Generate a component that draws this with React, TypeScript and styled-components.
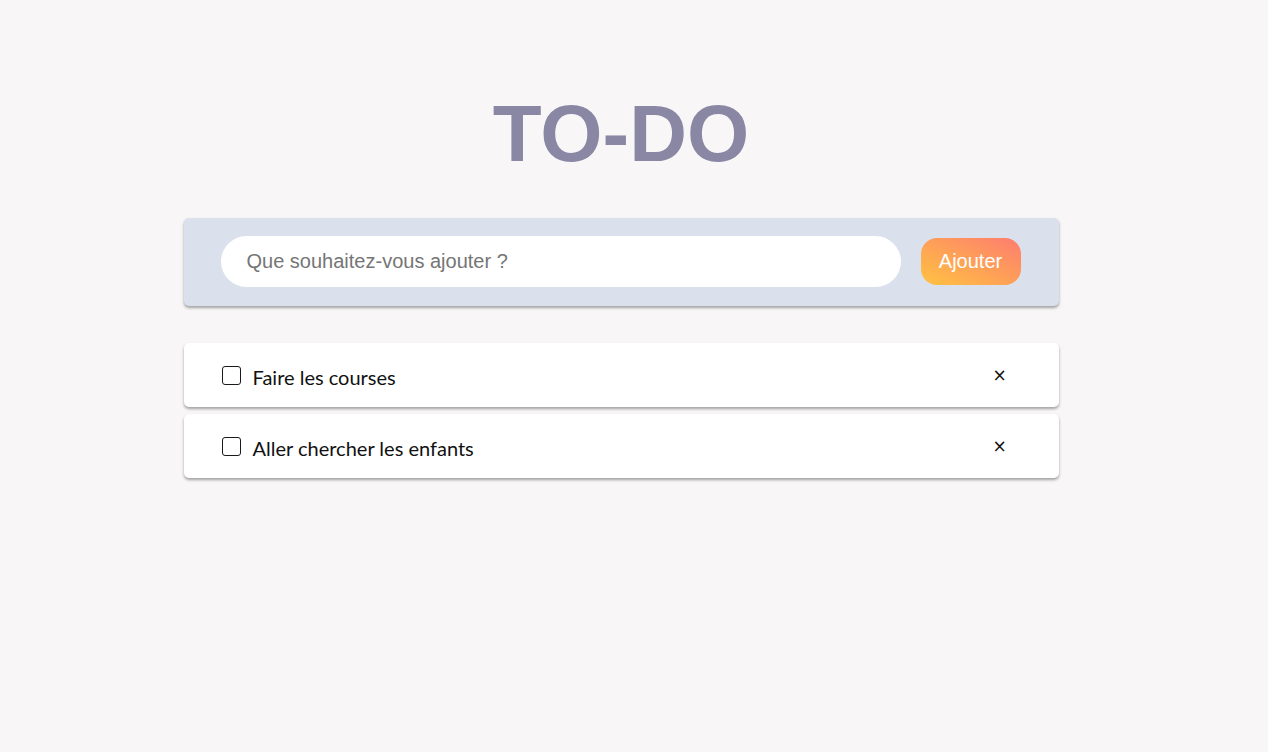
import * as React from "react";
import styled, { createGlobalStyle } from "styled-components";

const GlobalStyle = createGlobalStyle`
  html, body {
    margin: 0;
    padding: 0;
    background: #f8f6f7;
  }
  body {
    font-family: "Liberation Sans", Arial, sans-serif;
  }
`;

type Todo = {
  id: number;
  label: string;
  done: boolean;
};

const initialTodos: Todo[] = [
  { id: 1, label: "Faire les courses", done: false },
  { id: 2, label: "Aller chercher les enfants", done: false },
];

const Page = styled.main`
  min-height: 752px;
  display: flex;
  flex-direction: column;
  align-items: center;
  padding-right: 26px;
`;

const Title = styled.h1`
  margin: 94px 0 45px;
  font-family: "Liberation Sans", Arial, sans-serif;
  font-size: 80px;
  line-height: 79px;
  font-weight: 700;
  color: #8a87a5;
`;

const Form = styled.form`
  width: 875px;
  height: 88px;
  box-sizing: border-box;
  display: flex;
  align-items: center;
  gap: 20px;
  padding: 0 38px 1px 37px;
  background: #dae0ec;
  border-radius: 5px;
  box-shadow: 0 2px 3px rgba(0, 0, 0, 0.35);
`;

const Input = styled.input`
  flex: 1;
  height: 51px;
  box-sizing: border-box;
  padding: 0 26px;
  border: none;
  outline: none;
  border-radius: 26px;
  background: #ffffff;
  font-family: "Liberation Sans", Arial, sans-serif;
  font-size: 20px;
  color: #333;

  &::placeholder {
    color: #757575;
  }
`;

const AddButton = styled.button`
  width: 100px;
  height: 47px;
  border: none;
  border-radius: 16px;
  background: linear-gradient(to top right, #ffc241, #fd7d6f);
  color: #ffffff;
  font-family: "Liberation Sans", Arial, sans-serif;
  font-size: 20px;
  cursor: pointer;
`;

const List = styled.ul`
  width: 875px;
  margin: 37px 0 0;
  padding: 0;
  list-style: none;
  display: flex;
  flex-direction: column;
  gap: 7px;
`;

const Item = styled.li`
  height: 64px;
  box-sizing: border-box;
  display: flex;
  align-items: center;
  padding: 0 38px;
  background: #ffffff;
  border-radius: 5px;
  box-shadow: 0 2px 3px rgba(0, 0, 0, 0.35);
`;

const Check = styled.input`
  appearance: none;
  width: 19px;
  height: 19px;
  margin: 0 12px 0 0;
  box-sizing: border-box;
  border: 1.5px solid #1a1a1a;
  border-radius: 3px;
  background: #ffffff;
  flex-shrink: 0;

  &:checked {
    background: #8a87a5;
  }
`;

const Label = styled.span<{ $done: boolean }>`
  flex: 1;
  padding-top: 3px;
  font-family: "Lato", "Open Sans", sans-serif;
  font-size: 20px;
  color: #111111;
  text-decoration: ${(p) => (p.$done ? "line-through" : "none")};
`;

const Remove = styled.button`
  width: 30px;
  height: 30px;
  margin-right: 6px;
  padding: 0;
  border: none;
  background: transparent;
  font-family: "DejaVu Sans", sans-serif;
  font-size: 17px;
  line-height: 30px;
  color: #111111;
  cursor: pointer;
`;

export default function App() {
  const [todos, setTodos] = React.useState<Todo[]>(initialTodos);
  const [text, setText] = React.useState("");

  const add = (e: React.FormEvent) => {
    e.preventDefault();
    if (!text.trim()) return;
    setTodos([...todos, { id: Date.now(), label: text.trim(), done: false }]);
    setText("");
  };

  const toggle = (id: number) =>
    setTodos(todos.map((t) => (t.id === id ? { ...t, done: !t.done } : t)));

  const remove = (id: number) => setTodos(todos.filter((t) => t.id !== id));

  return (
    <>
      <GlobalStyle />
      <Page>
        <Title>TO-DO</Title>
        <Form onSubmit={add}>
          <Input
            value={text}
            onChange={(e) => setText(e.target.value)}
            placeholder="Que souhaitez-vous ajouter ?"
          />
          <AddButton type="submit">Ajouter</AddButton>
        </Form>
        <List>
          {todos.map((t) => (
            <Item key={t.id}>
              <Check
                type="checkbox"
                checked={t.done}
                onChange={() => toggle(t.id)}
              />
              <Label $done={t.done}>{t.label}</Label>
              <Remove type="button" onClick={() => remove(t.id)}>
                ×
              </Remove>
            </Item>
          ))}
        </List>
      </Page>
    </>
  );
}
